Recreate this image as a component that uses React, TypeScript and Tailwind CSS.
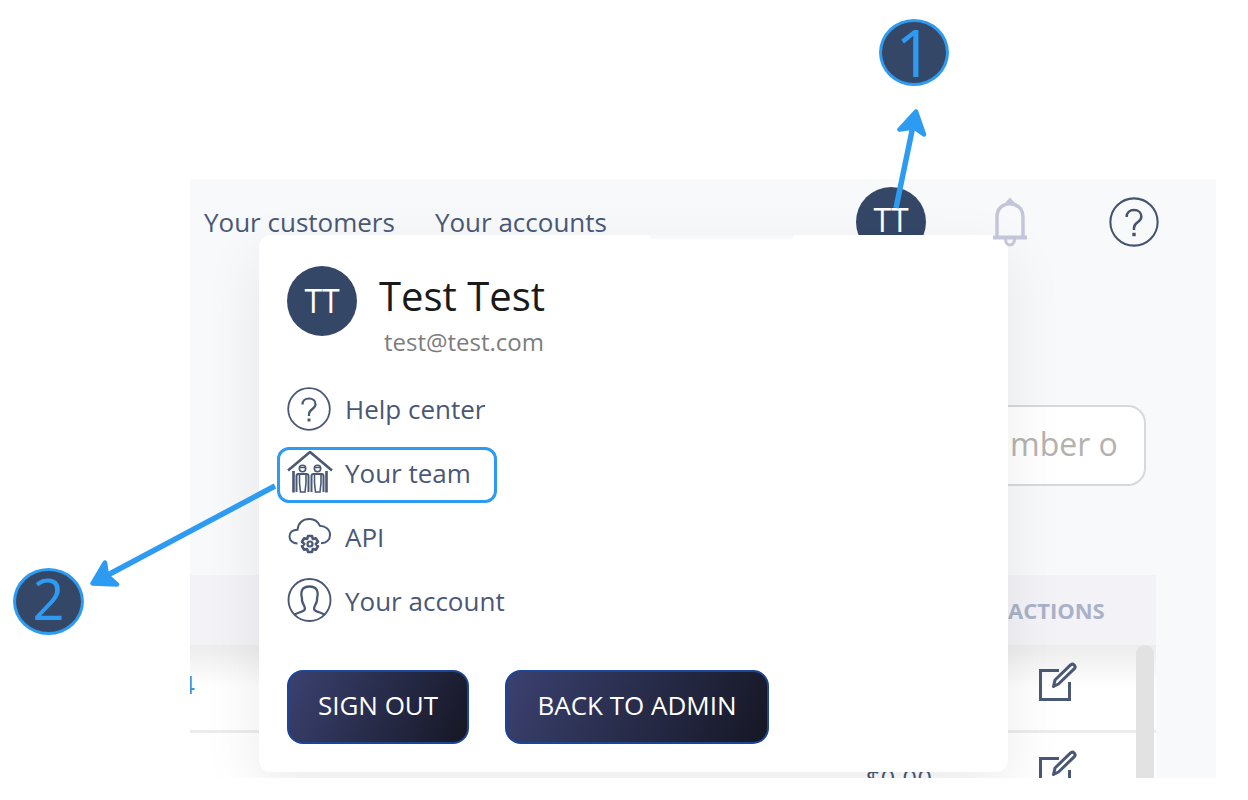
import React from "react";

const HelpIcon = ({ className }: { className?: string }) => (
  <svg viewBox="0 0 44 44" className={className} fill="none" stroke="currentColor" strokeWidth="1.8" aria-hidden="true">
    <circle cx="22" cy="22" r="20.8" />
    <path d="M15.500 17.500c0-3.800 2.700-6 6.500-6s6.500 2.300 6.500 5.700c0 5.300-6.500 4.800-6.500 9.800v2" strokeWidth="2.200" />
    <path d="M22 31.500v3" strokeWidth="3" />
  </svg>
);

const BellIcon = () => (
  <svg viewBox="0 0 36 50" className="h-[50px] w-9" fill="none" stroke="currentColor" strokeWidth="3" aria-hidden="true">
    <path d="M5 40V20C5 12 10 7.500 18 6.500c8 1 13 5.500 13 13.500v20" strokeWidth="3.500" />
    <path d="M1 40.500h34" strokeWidth="4" />
    <path d="M14 6.500L18 2l4 4.500z" fill="currentColor" strokeWidth="2" />
    <path d="M13.500 42c0 3.500 2 6 4.500 6s4.500-2.500 4.500-6" strokeWidth="3" />
  </svg>
);

const TeamIcon = () => (
  <svg viewBox="0 2 46 44" className="h-11 w-[46px] shrink-0" fill="none" stroke="currentColor" strokeWidth="1.600" aria-hidden="true">
    <path d="M1 21.500L23 3l22 18.500" strokeWidth="2.600" />
    <path d="M6.500 22v21.500M39.500 22v21.500" strokeWidth="2.600" />
    <circle cx="15.500" cy="19.500" r="3.200" />
    <circle cx="30.500" cy="19.500" r="3.200" />
    <path d="M12.500 18.500h6M27.500 18.500h6" />
    <path d="M9.500 43V27c0-1.300.8-2 2-2h8c1.300 0 2 .8 2 2v16M24.500 43V27c0-1.200.8-2 2-2h8c1.200 0 2 .7 2 2v16" strokeWidth="2" />
    <path d="M12.500 26v8l1 9h4.500l1-9v-8M27.500 26v8l1 9h4.500l1-9v-8" />
  </svg>
);

const ApiIcon = () => (
  <svg viewBox="0 1 44 44" className="size-11 shrink-0" fill="none" stroke="currentColor" strokeWidth="2" aria-hidden="true">
    <path d="M10.500 29.500C6 29.500 2.500 26.500 2.500 22.500c0-4 3-6.800 8-6.800C11.500 8.500 16 5 22.500 5c5 0 8.500 2.700 10.300 6.700 6 .5 10.200 4 10.200 9.200 0 4.600-3.300 8-9 8.300" />
    <path
      d="M21 22h4l.8 3 3-.8 2.200 3.600-2.200 2.200 2.200 2.200-2.200 3.600-3-.8-.8 3h-4l-.8-3-3 .8-2.200-3.600 2.200-2.200-2.200-2.200 2.200-3.600 3 .8z"
      strokeWidth="2.600"
      strokeLinejoin="round"
    />
    <circle cx="23" cy="30" r="2.500" strokeWidth="2.200" />
  </svg>
);

const AccountIcon = () => (
  <svg viewBox="0 0 46 46" className="size-[46px] shrink-0" fill="none" stroke="currentColor" strokeWidth="1.900" aria-hidden="true">
    <circle cx="22.500" cy="22" r="21" />
    <path d="M7 37c2-2.300 8.500-2.700 10.500-5 .8-1.300.3-3-.5-4.500-1.500-2.500-2.500-4.500-2-7-2-7.500.5-12 7.500-12s9.500 4.500 7.500 12c.5 2.500-.5 4.500-2 7-.8 1.500-1.300 3.200-.5 4.500 2 2.300 8.500 2.700 10.500 5" strokeWidth="2.300" />
  </svg>
);

const EditIcon = () => (
  <svg viewBox="0 0 40 40" className="size-10" fill="none" stroke="currentColor" strokeWidth="3" aria-hidden="true">
    <path d="M22 8.500H3.500v29h29V20" />
    <path d="M16.500 24.500l1.500-6.500L33.300 3.200c1.200-1.200 2.800-1.200 3.900-.2 1.100 1.100 1.100 2.700-.1 3.900L21.500 22z" strokeLinejoin="round" />
  </svg>
);

const menuItems = [
  { label: "Help center", icon: <HelpIcon className="size-11 shrink-0" />, marked: false },
  { label: "Your team", icon: <TeamIcon />, marked: true },
  { label: "API", icon: <ApiIcon />, marked: false },
  { label: "Your account", icon: <AccountIcon />, marked: false },
];

const rows = [
  { id: "4", amount: "" },
  { id: "", amount: "$0.00" },
];

const buttonClass =
  "h-[74px] rounded-2xl border-2 border-[#1b4596] bg-[linear-gradient(115deg,#3b4170,#151724)] pb-1 text-[26px] text-white";

function AccountMenu() {
  return (
    <div className="absolute top-14 right-[208px] left-[69px] z-10 rounded-xl bg-white px-7 pt-[31px] pb-7 shadow-[0_20px_60px_rgba(0,0,0,0.08)]">
      <div aria-hidden="true" className="absolute top-0 left-[390px] h-1 w-[145px] rounded-b-lg bg-[#f8f9fb]" />
      <div className="flex items-start">
        <div className="flex size-[70px] shrink-0 items-center justify-center rounded-full bg-[#344767] text-[32px] text-white">
          TT
        </div>
        <div className="ml-[22px] pt-[6px]">
          <p className="text-[40px] leading-[48px] text-[#1a1a1a]">Test Test</p>
          <p className="mt-[6px] pl-[5px] text-2xl leading-8 text-[#7d7d7d]">test@test.com</p>
        </div>
      </div>

      <ul className="mt-[25px] -ml-[10px] flex flex-col gap-2">
        {menuItems.map((item) => (
          <li key={item.label}>
            <a
              href="#"
              className={
                item.marked
                  ? "flex h-14 w-[220px] items-center rounded-xl border-3 border-[#2e9bf2] pb-1 pl-[7px]"
                  : "flex h-14 w-fit items-center border-3 border-transparent pb-1 pl-[7px]"
              }
            >
              <span className="w-[58px] shrink-0">{item.icon}</span>
              <span className="whitespace-nowrap">{item.label}</span>
            </a>
          </li>
        ))}
      </ul>

      <div className="mt-9 flex gap-9 pt-[3px]">
        <button type="button" className={`${buttonClass} w-[182px]`}>
          SIGN OUT
        </button>
        <button type="button" className={`${buttonClass} w-[264px]`}>
          BACK TO ADMIN
        </button>
      </div>
    </div>
  );
}

export default function App() {
  return (
    <div className="relative flex h-screen flex-col overflow-hidden bg-white pt-[179px] pr-8 pb-[22px] pl-[190px] font-['Open_Sans',sans-serif] text-[26px] text-[#4a5875]">
      <main className="relative flex min-h-0 flex-1 flex-col overflow-hidden bg-[#f8f9fb]">
        <header className="flex h-[86px] shrink-0 items-center pr-[57px] pl-[14px]">
          <nav className="flex gap-10 whitespace-nowrap">
            <a href="#">Your customers</a>
            <a href="#">Your accounts</a>
          </nav>
          <button
            type="button"
            aria-label="Account"
            className="ml-auto flex size-[70px] items-center justify-center rounded-full bg-[#344767] pb-1 text-[32px] text-white"
          >
            TT
          </button>
          <button type="button" aria-label="Notifications" className="relative z-20 ml-[66px] text-[#c3c5d8]">
            <BellIcon />
          </button>
          <button type="button" aria-label="Help" className="ml-[81px] text-[#46536f]">
            <HelpIcon className="size-[50px]" />
          </button>
        </header>

        <div className="mt-[140px] flex justify-end pr-[70px]">
          <input
            type="text"
            aria-label="Search"
            placeholder="mber o"
            className="h-[81px] w-[170px] rounded-[18px] border-2 border-[#d6d9dc] bg-white pb-1 pl-8 text-[32px] placeholder:text-[#b5b2ae]"
          />
        </div>

        <div className="relative mt-[89px] mr-[60px] min-h-0 flex-1 overflow-hidden bg-white">
          <table className="w-full table-fixed">
            <thead>
              <tr className="h-[70px] bg-[#f3f2f7] text-[22px] text-[#a9b2c8]">
                <th aria-label="Number" />
                <th aria-label="Amount" />
                <th className="w-[148px] text-left font-bold">ACTIONS</th>
              </tr>
            </thead>
            <tbody>
              {rows.map((row, i) => (
                <tr
                  key={i}
                  className={
                    i === 0
                      ? "h-[87px] border-b-2 border-[#ebebf0] bg-linear-to-b from-[#ececec] to-white to-50%"
                      : "h-[87px]"
                  }
                >
                  <td className="pb-2 text-[#4a8fd6]">
                    <span className="-ml-[10px]">{row.id}</span>
                  </td>
                  <td className="pt-1 pr-[76px] text-right">{row.amount}</td>
                  <td className="pb-3 pl-[29px]">
                    <button type="button" aria-label="Edit" className="block">
                      <EditIcon />
                    </button>
                  </td>
                </tr>
              ))}
            </tbody>
          </table>
          {/* scroll thumb */}
          <div className="absolute top-[70px] right-[2px] bottom-0 w-[18px] rounded-t-full bg-[#e2e2e2]" />
        </div>

        <AccountMenu />
      </main>

      {/* numbered callouts */}
      <svg
        viewBox="0 0 1248 800"
        className="pointer-events-none absolute top-0 left-0 z-30 h-[800px] w-[1248px]"
        fill="none"
        stroke="#2e9bf2"
        aria-hidden="true"
      >
        <path d="M896 208L913 126M275 486L104 577" strokeWidth="5.500" />
        <path
          d="M916 111.500L899.500 129.500L914 127.500L924 134.500ZM92.500 583.500L105 562.500L107 575.500L117 584.500Z"
          fill="#2e9bf2"
          strokeWidth="4.500"
          strokeLinejoin="round"
        />
      </svg>
      <div className="absolute top-[19px] left-[879px] z-30 flex h-[67px] w-[70px] items-center justify-center rounded-[50%] border-3 border-[#2e9bf2] bg-[#344767] pb-1 text-[66px] leading-none text-[#2e9bf2]">
        1
      </div>
      <div className="absolute top-[568px] left-[13px] z-30 flex h-[67px] w-[71px] items-center justify-center rounded-[50%] border-3 border-[#2e9bf2] bg-[#344767] pb-2 text-[56px] leading-none text-[#2e9bf2]">
        2
      </div>
    </div>
  );
}
